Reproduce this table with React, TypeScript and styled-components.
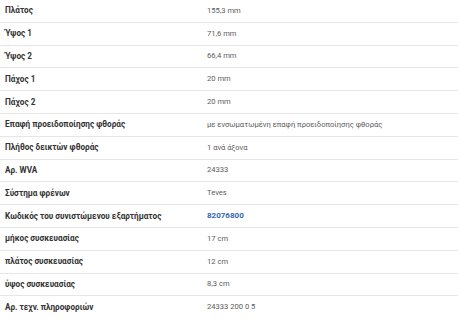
import styled, { createGlobalStyle } from "styled-components";

const GlobalStyle = createGlobalStyle`
    html, body {
        margin: 0;
        padding: 0;
        background: #ffffff;
    }
    body {
        font-family: Roboto, "Noto Sans", sans-serif;
    }
`;

type Spec = {
    label: string;
    value: string;
    link?: boolean;
};

const specs: Spec[] = [
    { label: "Πλάτος", value: "155,3 mm" },
    { label: "Ύψος 1", value: "71,6 mm" },
    { label: "Ύψος 2", value: "66,4 mm" },
    { label: "Πάχος 1", value: "20 mm" },
    { label: "Πάχος 2", value: "20 mm" },
    { label: "Επαφή προειδοποίησης φθοράς", value: "με ενσωματωμένη επαφή προειδοποίησης φθοράς" },
    { label: "Πλήθος δεικτών φθοράς", value: "1 ανά άξονα" },
    { label: "Αρ. WVA", value: "24333" },
    { label: "Σύστημα φρένων", value: "Teves" },
    { label: "Κωδικός του συνιστώμενου εξαρτήματος", value: "82076800", link: true },
    { label: "μήκος συσκευασίας", value: "17 cm" },
    { label: "πλάτος συσκευασίας", value: "12 cm" },
    { label: "ύψος συσκευασίας", value: "8,3 cm" },
    { label: "Αρ. τεχν. πληροφοριών", value: "24333 200 0 5" },
];

const App = () => {
    return (
        <>
            <GlobalStyle />
            <Table>
                {specs.map((s, i) => (
                    <Row key={s.label} $last={i === specs.length - 1}>
                        <Label>{s.label}</Label>
                        <Value $link={s.link}>{s.value}</Value>
                    </Row>
                ))}
            </Table>
        </>
    );
};

export default App;

const Table = styled.div`
    width: 458px;
    display: flex;
    flex-direction: column;
`;

const Row = styled.div<{ $last?: boolean }>`
    display: grid;
    grid-template-columns: 202px 1fr;
    align-items: center;
    height: 22.8px;
    padding-bottom: 1px;
    box-sizing: border-box;
    border-bottom: 1px solid ${(p) => (p.$last ? "transparent" : "#e6e6e6")};
`;

const Label = styled.div`
    padding-left: 5px;
    font-size: 8.2px;
    color: #333333;
    font-weight: 700;
    white-space: nowrap;
`;

const Value = styled.div<{ $link?: boolean }>`
    padding-left: 5px;
    font-size: ${(p) => (p.$link ? "8px" : "7.6px")};
    color: ${(p) => (p.$link ? "#3363b3" : "#5c5c5c")};
    font-weight: ${(p) => (p.$link ? 700 : 400)};
    white-space: nowrap;
`;
